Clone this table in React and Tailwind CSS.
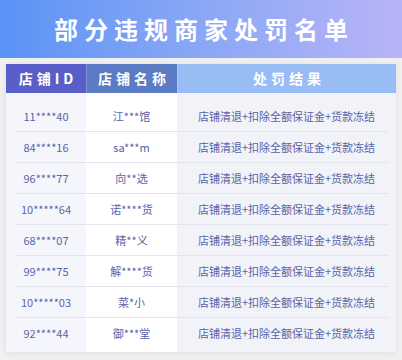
import React from "react";

const rows = [
  ["11****40", "江***馆"],
  ["84****16", "sa***m"],
  ["96****77", "向**选"],
  ["10*****64", "诺****货"],
  ["68****07", "精**义"],
  ["99****75", "解****货"],
  ["10*****03", "菜*小"],
  ["92****44", "御***堂"],
];
const result = "店铺清退+扣除全额保证金+货款冻结";

function Column({ header, headerCls, bodyCls, width, items, lineCls }) {
  return (
    <div className={`flex flex-col ${width}`}>
      <div className={`h-[29px] flex items-center justify-center text-white text-[14px] font-bold tracking-[4px] ${headerCls}`}>
        <span className="pl-[4px]">{header}</span>
      </div>
      <div className={`flex-1 flex flex-col pt-[8px] pb-[4px] ${bodyCls}`}>
        {items.map((t, i) => (
          <React.Fragment key={i}>
            {i > 0 && <div className={`h-px bg-[#e4e5ec] ${lineCls}`} />}
            <div className="h-[30px] flex items-center justify-center text-[11px] text-[#5863a8]">
              {t}
            </div>
          </React.Fragment>
        ))}
      </div>
    </div>
  );
}

export default function App() {
  return (
    <div
      className="w-[402px] h-[360px] bg-[#f0f0f3] overflow-hidden"
      style={{ fontFamily: '"Noto Sans CJK SC", "Noto Sans", sans-serif' }}
    >
      <div className="h-[58px] bg-gradient-to-r from-[#5a93f6] via-[#8aa7f5] to-[#b8b4f8] flex items-center justify-center">
        <span className="text-white text-[24px] font-bold tracking-[6px] pl-[6px]">部分违规商家处罚名单</span>
      </div>
      <div className="mx-[6px] mt-[6px] flex bg-white shadow-[0_1px_6px_rgba(0,0,0,0.08)] rounded-b-[3px] overflow-hidden">
        <Column
          header="店铺ID"
          width="w-[80px]"
          headerCls="bg-[#5a5ec8]"
          bodyCls="bg-[#f5f6fb]"
          lineCls="ml-[9px]"
          items={rows.map((r) => r[0])}
        />
        <Column
          header="店铺名称"
          width="w-[91px]"
          headerCls="bg-[#5b7cc5] border-l border-[#7f93d6]"
          bodyCls="bg-white"
          lineCls=""
          items={rows.map((r) => r[1])}
        />
        <Column
          header="处罚结果"
          width="flex-1"
          headerCls="bg-[#98bdf5] border-l border-[#a9c8f6]"
          bodyCls="bg-[#f2f3f8]"
          lineCls="mr-[7px]"
          items={rows.map(() => result)}
        />
      </div>
    </div>
  );
}
